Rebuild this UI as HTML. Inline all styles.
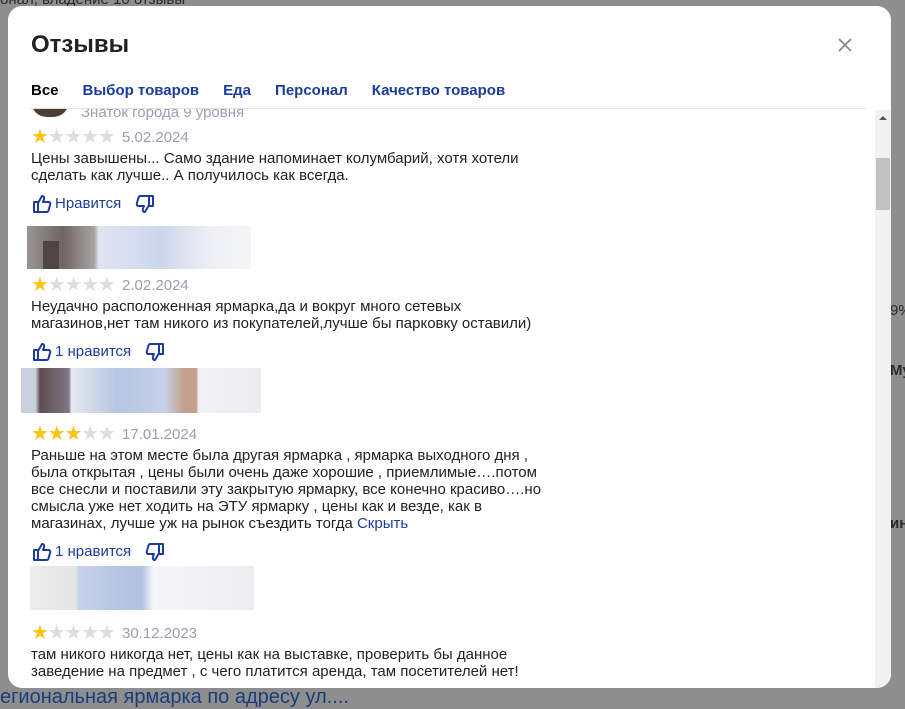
<!DOCTYPE html>
<html><head><meta charset="utf-8"><style>
*{margin:0;padding:0;box-sizing:border-box}
body{width:905px;height:708px;overflow:hidden;background:#8e8e8e;font-family:"Liberation Sans",Arial,sans-serif;position:relative}
.bg{position:absolute;color:#2a2a2a;font-size:15px;white-space:nowrap}
.modal{position:absolute;left:8px;top:6px;width:883px;height:682px;background:#fff;border-radius:14px;overflow:hidden}
h1{position:absolute;left:23px;top:25px;font-size:24px;font-weight:bold;color:#222}
.close{position:absolute;left:828px;top:30px}
.tabs{position:absolute;left:23px;top:76px;font-size:15px;font-weight:bold;color:#1a3d9c;white-space:nowrap}
.tabs span{margin-right:24px}
.tabs span:first-child{color:#000;margin-right:24px}
.div{position:absolute;left:22px;top:102px;width:836px;height:1px;background:#e2e2e2}
.sb{position:absolute;left:867px;top:104px;width:16px;height:578px;background:#f1f1f1}
.thumb{position:absolute;left:868px;top:152px;width:14px;height:52px;background:#c1c1c1}
.content{position:absolute;left:0;top:103px;width:866px;height:579px;overflow:hidden}
.a{position:absolute;font-size:15px;color:#222;line-height:17px;white-space:nowrap}
.d{position:absolute;font-size:15px;color:#9a9eb0}
.st{position:absolute;font-size:20px;letter-spacing:-1.2px;color:#ddd;line-height:18px}
.st b{color:#f5c518;font-weight:normal}
.lk{position:absolute;font-size:15px;color:#1a3d9c;white-space:nowrap}
.px{position:absolute}
</style></head><body>
<div class="bg" style="left:0;top:-9px">онал, владение 10 отзывы</div>
<div class="bg" style="left:0;top:686px;font-size:20px;color:#1a3d7c">егиональная ярмарка по адресу ул....</div>
<div class="bg" style="left:890px;top:302px">9%</div>
<div class="bg" style="left:890px;top:362px;font-weight:bold">Му</div>
<div class="bg" style="left:890px;top:515px;font-weight:bold">ин</div>
<div class="modal">
<h1>Отзывы</h1>
<svg class="close" width="18" height="18" viewBox="0 0 18 18"><path d="M3 3L15 15M15 3L3 15" stroke="#888" stroke-width="1.8"/></svg>
<div class="tabs"><span>Все</span><span>Выбор товаров</span><span>Еда</span><span>Персонал</span><span>Качество товаров</span></div>
<div class="div"></div>
<div class="content">
 <div style="position:absolute;left:23px;top:-8px;width:38px;height:16px;border-radius:0 0 19px 19px;background:#4a3d35"></div>
 <div class="d" style="left:73px;top:-5px">Знаток города 9 уровня</div>

 <div class="st" style="left:23px;top:19px"><b>★</b>★★★★</div>
 <div class="d" style="left:114px;top:20px">5.02.2024</div>
 <div class="a" style="left:23px;top:41px">Цены завышены... Само здание напоминает колумбарий, хотя хотели<br>сделать как лучше.. А получилось как всегда.</div>
 <svg class="px" style="left:24px;top:85px" width="20" height="20" viewBox="0 0 20 20"><path d="M2 8h4v10H2zM6 9l4-7c2 0 2.5 1.5 2 3.5L11 8h5.5c1.5 0 2 1.3 1.7 2.5l-1.7 6c-.3 1-1 1.5-2 1.5H6" fill="none" stroke="#1a3d9c" stroke-width="2" stroke-linejoin="round"/></svg>
 <div class="lk" style="left:47px;top:86px">Нравится</div>
 <svg class="px" style="left:127px;top:85px" width="20" height="20" viewBox="0 0 20 20" transform="scale(-1,-1)"><path d="M2 8h4v10H2zM6 9l4-7c2 0 2.5 1.5 2 3.5L11 8h5.5c1.5 0 2 1.3 1.7 2.5l-1.7 6c-.3 1-1 1.5-2 1.5H6" fill="none" stroke="#1a3d9c" stroke-width="2" stroke-linejoin="round"/></svg>

 <div class="px" style="left:19px;top:117px;width:224px;height:43px;background:linear-gradient(90deg,#9a9595 0,#6e6564 16%,#a8a3a2 30%,#dfe4f0 32%,#cdd6ec 60%,#eceef4 80%,#f6f6f7 100%)"></div>
 <div class="px" style="left:35px;top:132px;width:16px;height:28px;background:#4f4544"></div>
 <div class="st" style="left:23px;top:167px"><b>★</b>★★★★</div>
 <div class="d" style="left:114px;top:168px">2.02.2024</div>
 <div class="a" style="left:23px;top:189px">Неудачно расположенная ярмарка,да и вокруг много сетевых<br>магазинов,нет там никого из покупателей,лучше бы парковку оставили)</div>
 <svg class="px" style="left:24px;top:233px" width="20" height="20" viewBox="0 0 20 20"><path d="M2 8h4v10H2zM6 9l4-7c2 0 2.5 1.5 2 3.5L11 8h5.5c1.5 0 2 1.3 1.7 2.5l-1.7 6c-.3 1-1 1.5-2 1.5H6" fill="none" stroke="#1a3d9c" stroke-width="2" stroke-linejoin="round"/></svg>
 <div class="lk" style="left:47px;top:234px">1 нравится</div>
 <svg class="px" style="left:137px;top:233px" width="20" height="20" viewBox="0 0 20 20" transform="scale(-1,-1)"><path d="M2 8h4v10H2zM6 9l4-7c2 0 2.5 1.5 2 3.5L11 8h5.5c1.5 0 2 1.3 1.7 2.5l-1.7 6c-.3 1-1 1.5-2 1.5H6" fill="none" stroke="#1a3d9c" stroke-width="2" stroke-linejoin="round"/></svg>

 <div class="px" style="left:13px;top:259px;width:240px;height:45px;background:linear-gradient(90deg,#c8d0dc 0,#c8d0dc 6%,#5e4d4d 8%,#7f7885 20%,#e6e8ef 21%,#b7c6e2 40%,#c5d0e8 60%,#c4a08a 68%,#c4a08a 73%,#f2f2f4 74%,#ececef 100%)"></div>
 <div class="st" style="left:23px;top:316px"><b>★★★</b>★★</div>
 <div class="d" style="left:114px;top:317px">17.01.2024</div>
 <div class="a" style="left:23px;top:338px">Раньше на этом месте была другая ярмарка , ярмарка выходного дня ,<br>была открытая , цены были очень даже хорошие , приемлимые….потом<br>все снесли и поставили эту закрытую ярмарку, все конечно красиво….но<br>смысла уже нет ходить на ЭТУ ярмарку , цены как и везде, как в<br>магазинах, лучше уж на рынок съездить тогда <span style="color:#1a3d9c">Скрыть</span></div>
 <svg class="px" style="left:24px;top:433px" width="20" height="20" viewBox="0 0 20 20"><path d="M2 8h4v10H2zM6 9l4-7c2 0 2.5 1.5 2 3.5L11 8h5.5c1.5 0 2 1.3 1.7 2.5l-1.7 6c-.3 1-1 1.5-2 1.5H6" fill="none" stroke="#1a3d9c" stroke-width="2" stroke-linejoin="round"/></svg>
 <div class="lk" style="left:47px;top:434px">1 нравится</div>
 <svg class="px" style="left:137px;top:433px" width="20" height="20" viewBox="0 0 20 20" transform="scale(-1,-1)"><path d="M2 8h4v10H2zM6 9l4-7c2 0 2.5 1.5 2 3.5L11 8h5.5c1.5 0 2 1.3 1.7 2.5l-1.7 6c-.3 1-1 1.5-2 1.5H6" fill="none" stroke="#1a3d9c" stroke-width="2" stroke-linejoin="round"/></svg>

 <div class="px" style="left:22px;top:457px;width:224px;height:44px;background:linear-gradient(90deg,#ececec 0,#e6e6e6 20%,#c6d2ea 22%,#b2c2e0 45%,#b2c2e0 50%,#f4f5f8 55%,#eeeef2 100%)"></div>
 <div class="st" style="left:23px;top:515px"><b>★</b>★★★★</div>
 <div class="d" style="left:114px;top:516px">30.12.2023</div>
 <div class="a" style="left:23px;top:537px">там никого никогда нет, цены как на выставке, проверить бы данное<br>заведение на предмет , с чего платится аренда, там посетителей нет!</div>
</div>
<div class="sb"></div>
<div class="thumb"></div>
<div style="position:absolute;left:871px;top:110px;width:0;height:0;border:4px solid transparent;border-bottom-color:#555;border-top:0"></div>
</div>
</body></html>
